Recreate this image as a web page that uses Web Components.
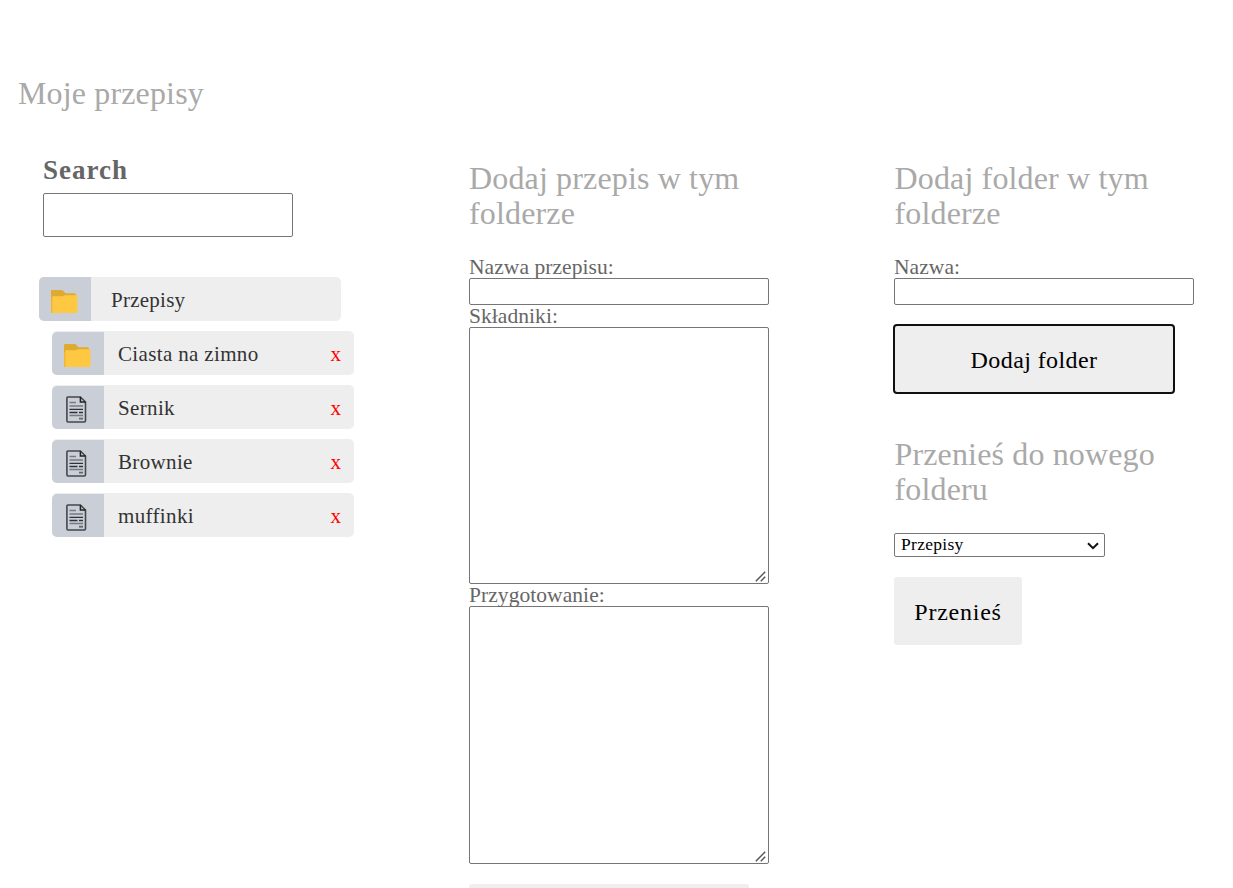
<!DOCTYPE html>
<html lang="pl">
<head>
<meta charset="utf-8">
<title>Moje przepisy</title>
<style>
html,body{margin:0;background:#fff}
body{height:888px;overflow:hidden;font-family:"Liberation Serif",serif;color:#666}
</style>
</head>
<body>
<recipe-app></recipe-app>
<script>
class Base extends HTMLElement {
  constructor() { super(); this.attachShadow({mode: 'open'}); }
  connectedCallback() {
    this.shadowRoot.innerHTML = `<style>*{box-sizing:border-box}${this.css()}</style>${this.html()}`;
  }
}
customElements.define('section-title', class extends Base {
  css() { return `:host{display:block;font-size:32px;line-height:35px;letter-spacing:.15px;color:#a9a9a9}`; }
  html() { return `<slot></slot>`; }
});
customElements.define('form-field', class extends Base {
  css() { return `:host{display:block;width:300px;position:relative}
    label{display:block;font-size:21.5px;line-height:22px;height:22px;letter-spacing:.06px;white-space:nowrap}
    input,textarea{display:block;width:300px;margin:0;border:1px solid #767676;border-radius:2px;background:#fff;outline:0}
    input{height:27px}textarea{height:var(--area,257px);resize:none}
    svg{position:absolute;right:3px;bottom:2px}`; }
  html() { return `<label><slot></slot></label>${this.hasAttribute('area') ? '<textarea></textarea><svg width="11" height="11" viewBox="0 0 11 11" stroke="#555" stroke-width="1.5"><path d="M.8 10.2L10.2 .8M5.8 10.2L10.2 5.8"/></svg>' : '<input>'}`; }
});
customElements.define('action-button', class extends Base {
  css() { return `:host{display:block}
    button{display:block;width:100%;height:68px;margin:0;padding:2px 0 0;border:0;border-radius:3px;background:#eee;color:#000;font:24px "Liberation Serif",serif;letter-spacing:var(--track,.4px)}
    :host([focused]) button{outline:2px solid #101010;outline-offset:-1px}`; }
  html() { return `<button><slot></slot></button>`; }
});
customElements.define('folder-icon', class extends Base {
  css() { return `:host{display:block;width:27px;height:23px}svg{display:block}`; }
  html() { return `<svg width="27" height="23" viewBox="0 0 27 23"><path d="M0 22.5V1Q0 0 1 0H10.5Q11.7 0 12.4 1L14.5 3.3H23.5Q25 3.3 25 4.8V12H0Z" fill="#dfaa32"/><path d="M.3 23L1.4 6.3H11.5L14 5.3H25.5Q26.5 5.3 26.5 6.3V22Q26.5 23 25.5 23Z" fill="#ffc843"/><path d="M0 8H1.5V23H0Z" fill="#edb83a"/></svg>`; }
});
customElements.define('document-icon', class extends Base {
  css() { return `:host{display:block;width:21px;height:27px}svg{display:block}`; }
  html() { return `<svg width="21" height="27" viewBox="0 0 21 27" fill="none"><path d="M1.8 1H14.4L19.5 6V24.8Q19.5 26 18.3 26H2Q.9 26 .9 24.8V2Q.9 1 1.8 1Z" stroke="#44484c" stroke-width="1.6"/><path d="M14.4 1V6H19.5" stroke="#222" stroke-width="1.5"/><path d="M3.5 6.5H10M3.5 10H17M3.5 19.5H17" stroke="#777b80" stroke-width="1.6"/><path d="M3.5 13.3H17M3.5 16.5H11.5M13 16.5H17" stroke="#303336" stroke-width="1.3"/><path d="M13 22.7H17" stroke="#63676b" stroke-width="1.8"/></svg>`; }
});
customElements.define('tree-row', class extends Base {
  css() { return `:host{display:flex;width:302px;height:44px;background:#eee;border-radius:5px;overflow:hidden;color:#333}
    .icon{width:52px;flex:none;background:#cacfd7;padding:12px 0 0 12px}
    :host([root]) .icon{padding:12.5px 0 0 11.7px}
    :host(:not([root])) .icon{margin-top:1px;padding:11.5px 0 0 11.6px;border-radius:5px 0 0 0}
    .icon.doc{padding:10px 0 0 14px!important}
    .name{flex:1;padding-left:14px;font-size:21px;line-height:47px;letter-spacing:.35px;white-space:nowrap}
    :host([root]) .name{padding-left:20px;letter-spacing:.25px}
    .del{width:23.5px;font-size:21px;line-height:47px;color:red}`; }
  html() {
    const doc = this.hasAttribute('doc'), root = this.hasAttribute('root');
    return `<div class="icon ${doc ? 'doc' : ''}">${doc ? '<document-icon></document-icon>' : '<folder-icon></folder-icon>'}</div>
      <div class="name"><slot></slot></div>${root ? '' : '<div class="del">x</div>'}`;
  }
});
customElements.define('search-box', class extends Base {
  css() { return `:host{display:block}
    label{display:block;font-size:27px;font-weight:bold;line-height:30px;letter-spacing:1px}
    input{display:block;margin:8px 0 0;width:250px;height:44px;border:1px solid #767676;border-radius:2px}`; }
  html() { return `<label>Search</label><input>`; }
});
customElements.define('folder-select', class extends Base {
  css() { return `:host{display:block;position:relative;width:211px}
    select{appearance:none;display:block;width:211px;height:24px;margin:0;padding:0 0 2px 6px;border:1px solid #767676;border-radius:2px;background:#fff;color:#000;font:17.5px "Liberation Serif",serif;letter-spacing:.3px}
    svg{position:absolute;right:6px;top:9px}`; }
  html() { return `<select><option>Przepisy</option></select><svg width="12" height="8" viewBox="0 0 12 8" fill="none"><path d="M1 1.2L6 6.2L11 1.2" stroke="#111" stroke-width="2"/></svg>`; }
});
customElements.define('recipe-app', class extends Base {
  css() { return `:host{display:block;padding:76px 0 0 18px;height:888px;box-sizing:border-box;overflow:hidden}
    main{display:grid;grid-template-columns:430px 425px 1fr;padding:44px 0 0 21px}
    search-box{margin-left:4px}
    .tree{display:flex;flex-direction:column;gap:10px;margin-top:40px}
    tree-row:not([root]){margin-left:13px}
    .mid,.right{padding-top:6px}
    .mid section-title,.right section-title{width:290px;margin-bottom:25px}
    .right section-title{padding-left:.5px}
    .mid action-button{width:280px;margin-top:20px}
    .add{width:280px;margin-top:20px}
    .right .move{margin-top:44px;margin-bottom:26px}
    .go{width:128px;margin-top:20px;--track:.75px}`; }
  html() { return `<section-title>Moje przepisy</section-title>
    <main>
      <div class="left"><search-box></search-box>
        <div class="tree"><tree-row root>Przepisy</tree-row><tree-row>Ciasta na zimno</tree-row><tree-row doc>Sernik</tree-row><tree-row doc>Brownie</tree-row><tree-row doc>muffinki</tree-row></div>
      </div>
      <div class="mid"><section-title>Dodaj przepis w tym folderze</section-title>
        <form-field>Nazwa przepisu:</form-field><form-field area>Składniki:</form-field><form-field area style="--area:258px">Przygotowanie:</form-field>
        <action-button></action-button>
      </div>
      <div class="right"><section-title>Dodaj folder w tym folderze</section-title>
        <form-field>Nazwa:</form-field><action-button class="add" focused>Dodaj folder</action-button>
        <section-title class="move">Przenieś do nowego folderu</section-title>
        <folder-select></folder-select><action-button class="go">Przenieś</action-button>
      </div>
    </main>`; }
});
</script>
</body>
</html>
